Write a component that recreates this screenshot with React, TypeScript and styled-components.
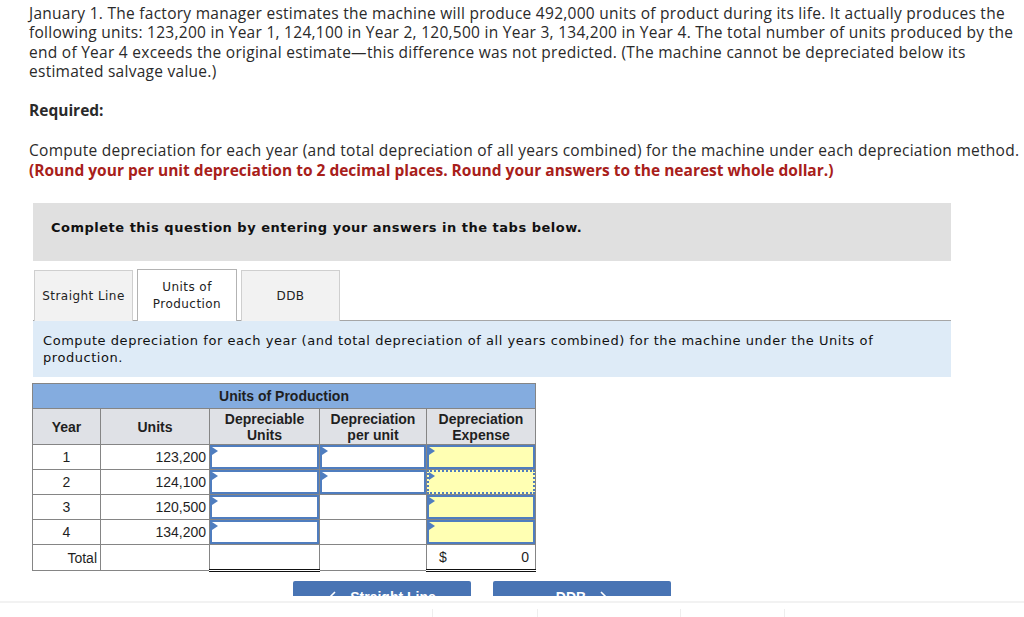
import React from 'react';
import styled, { createGlobalStyle, css } from 'styled-components';

const BODY_FONT = `"Open Sans", Lato, Arial, sans-serif`;
const PANEL_FONT = `"DejaVu Sans", Verdana, sans-serif`;
const TABLE_FONT = `"Liberation Sans", Arial, sans-serif`;

const GlobalStyle = createGlobalStyle`
  html, body {
    margin: 0;
    padding: 0;
    background: #fff;
  }
  body {
    overflow: hidden;
  }
`;

type Row = {
  year: string;
  units: string;
  perUnitInput: boolean;
  focused?: boolean;
};

const rows: Row[] = [
  { year: '1', units: '123,200', perUnitInput: true },
  { year: '2', units: '124,100', perUnitInput: true, focused: true },
  { year: '3', units: '120,500', perUnitInput: false },
  { year: '4', units: '134,200', perUnitInput: false },
];

const App = () => {
  return (
    <>
      <GlobalStyle />
      <Page>
        <Text>
          January 1. The factory manager estimates the machine will produce 492,000 units of product during its
          life. It actually produces the following units: 123,200 in Year 1, 124,100 in Year 2, 120,500 in Year 3,
          134,200 in Year 4. The total number of units produced by the end of Year 4 exceeds the original
          estimate—this difference was not predicted. (The machine cannot be depreciated below its estimated salvage
          value.)
        </Text>
        <Heading>Required:</Heading>
        <Text $loose>
          Compute depreciation for each year (and total depreciation of all years combined) for the machine under
          each depreciation method.
          <br />
          <Warning>
            (Round your per unit depreciation to 2 decimal places. Round your answers to the nearest whole dollar.)
          </Warning>
        </Text>

        <Question>
          <Banner>Complete this question by entering your answers in the tabs below.</Banner>

          <TabBar>
            <Tab>Straight Line</Tab>
            <Tab $active>
              Units of
              <br />
              Production
            </Tab>
            <Tab>DDB</Tab>
          </TabBar>

          <Instructions>
            Compute depreciation for each year (and total depreciation of all years combined) for the machine under
            the Units of production.
          </Instructions>

          <Grid>
            <colgroup>
              <col style={{ width: 68 }} />
              <col style={{ width: 109 }} />
              <col style={{ width: 110 }} />
              <col style={{ width: 107 }} />
              <col style={{ width: 109 }} />
            </colgroup>
            <thead>
              <tr>
                <BlueHead colSpan={5}>Units of Production</BlueHead>
              </tr>
              <tr>
                <GrayHead>Year</GrayHead>
                <GrayHead>Units</GrayHead>
                <GrayHead>
                  Depreciable
                  <br />
                  Units
                </GrayHead>
                <GrayHead>
                  Depreciation
                  <br />
                  per unit
                </GrayHead>
                <GrayHead>
                  Depreciation
                  <br />
                  Expense
                </GrayHead>
              </tr>
            </thead>
            <tbody>
              {rows.map((r) => (
                <tr key={r.year}>
                  <Cell $align="center">{r.year}</Cell>
                  <Cell $align="right">{r.units}</Cell>
                  <EntryCell>
                    <Entry />
                  </EntryCell>
                  {r.perUnitInput ? (
                    <EntryCell>
                      <Entry />
                    </EntryCell>
                  ) : (
                    <Cell />
                  )}
                  <EntryCell>
                    <Entry $yellow $focused={r.focused} />
                  </EntryCell>
                </tr>
              ))}
              <tr>
                <Cell $align="right">Total</Cell>
                <Cell />
                <TotalCell />
                <Cell />
                <TotalCell>
                  <Money>
                    <span>$</span>
                    <span>0</span>
                  </Money>
                </TotalCell>
              </tr>
            </tbody>
          </Grid>

          <ButtonRow>
            <NavButton>
              <Chevron viewBox="0 0 10 14">
                <path d="M7 2 L2 7 L7 12" />
              </Chevron>
              Straight Line
            </NavButton>
            <NavButton>
              DDB
              <Chevron viewBox="0 0 10 14">
                <path d="M3 2 L8 7 L3 12" />
              </Chevron>
            </NavButton>
          </ButtonRow>
        </Question>
      </Page>

      <Footer>
        <FooterBar>
          <FooterSlot style={{ width: 432 }} />
          <FooterSlot style={{ width: 104 }} $divider />
          <FooterSlot style={{ width: 142 }} $divider />
          <FooterSlot style={{ width: 103 }} $divider />
          <FooterSlot $divider />
        </FooterBar>
      </Footer>
    </>
  );
};

export default App;

const Page = styled.div`
  padding: 4px 0 40px 29px;
  font-family: ${BODY_FONT};
  color: #2a2a2a;
`;

const Text = styled.p<{ $loose?: boolean }>`
  width: 1003px;
  margin: 0 0 20px;
  font-size: 15.5px;
  letter-spacing: 0.27px;
  line-height: ${(p) => (p.$loose ? '20px' : '19.3px')};
`;

const Heading = styled.h3`
  margin: 0 0 20px;
  font-size: 15.5px;
  line-height: 19.3px;
  font-weight: 700;
`;

const Warning = styled.strong`
  color: #a8201a;
  font-weight: 700;
  letter-spacing: 0;
`;

const Question = styled.div`
  margin: 23px 0 0 4px;
  width: 918px;
`;

const Banner = styled.div`
  height: 58px;
  box-sizing: border-box;
  padding: 17px 18px 0;
  background: #e0e0e0;
  font-family: ${PANEL_FONT};
  font-size: 13px;
  letter-spacing: 0.5px;
  font-weight: 700;
  color: #111;
`;

const TabBar = styled.div`
  display: flex;
  align-items: flex-end;
  gap: 4px;
  margin-top: 8px;
  padding-left: 1px;
  height: 51px;
  border-bottom: 1px solid #a6a6a6;
`;

const Tab = styled.div<{ $active?: boolean }>`
  display: flex;
  align-items: center;
  justify-content: center;
  width: 99px;
  height: 51px;
  box-sizing: border-box;
  margin-bottom: -1px;
  border: 1px solid #cfcfcf;
  border-bottom: none;
  background: #f2f2f2;
  font-family: ${PANEL_FONT};
  font-size: 12px;
  letter-spacing: 0.45px;
  line-height: 17px;
  text-align: center;
  color: #222;

  ${(p) =>
    p.$active &&
    css`
      width: 100px;
      height: 52px;
      background: #fff;
      border-color: #b3b3b3;
    `}
`;

const Instructions = styled.div`
  height: 56px;
  box-sizing: border-box;
  padding: 11px 10px 0;
  background: #deebf7;
  font-family: ${PANEL_FONT};
  font-size: 13px;
  letter-spacing: 0.55px;
  line-height: 17px;
  color: #111;
`;

const Grid = styled.table`
  margin: 6px 0 0 -1px;
  border-collapse: collapse;
  table-layout: fixed;
  width: 504px;
  font-family: ${TABLE_FONT};
  font-size: 14px;
  color: #1f1f1f;

  th,
  td {
    border: 1px solid #858585;
  }
`;

const BlueHead = styled.th`
  height: 24px;
  padding: 0;
  background: #84acdf;
  font-weight: 700;
  text-align: center;
`;

const GrayHead = styled.th`
  height: 35px;
  padding: 0;
  background: #dfe1e6;
  font-weight: 700;
  line-height: 16px;
  text-align: center;
`;

const Cell = styled.td<{ $align?: 'left' | 'center' | 'right' }>`
  height: 24px;
  padding: 0 3px;
  text-align: ${(p) => p.$align ?? 'left'};
  background: #fff;
`;

const EntryCell = styled.td`
  height: 24px;
  padding: 0;
`;

const Entry = styled.div<{ $yellow?: boolean; $focused?: boolean }>`
  position: relative;
  height: 24px;
  box-sizing: border-box;
  border: 2px solid #4f7dbf;
  background: ${(p) => (p.$yellow ? '#ffffb3' : '#fff')};

  ${(p) =>
    p.$focused &&
    css`
      border: 2px dotted #4f7dbf;
    `}

  &::before {
    content: '';
    position: absolute;
    top: 0;
    left: 0;
    border-top: 4px solid transparent;
    border-bottom: 4px solid transparent;
    border-left: 6px solid #4f7dbf;
  }
`;

const TotalCell = styled.td`
  height: 24px;
  padding: 0 6px 0 12px;
  background: #fff;
  && {
    border-top: 1px solid #111;
    border-bottom: 3px double #111;
  }
`;

const Money = styled.div`
  display: flex;
  justify-content: space-between;
`;

const ButtonRow = styled.div`
  display: flex;
  gap: 22px;
  margin: 9px 0 0 260px;
`;

const NavButton = styled.button`
  display: flex;
  align-items: center;
  justify-content: center;
  gap: 12px;
  width: 178px;
  height: 32px;
  border: none;
  border-radius: 2px;
  background: #4874b4;
  color: #fff;
  font-family: ${TABLE_FONT};
  font-size: 14px;
  font-weight: 700;
`;

const Chevron = styled.svg`
  width: 10px;
  height: 14px;
  fill: none;
  stroke: #fff;
  stroke-width: 1.6;
`;

const Footer = styled.div`
  position: fixed;
  left: 0;
  right: 0;
  bottom: 0;
  height: 21px;
  padding-top: 5px;
  box-sizing: border-box;
  background: #fff;
`;

const FooterBar = styled.div`
  display: flex;
  height: 100%;
  border-top: 2px solid #f2f2f2;
  padding-top: 6px;
  box-sizing: border-box;
`;

const FooterSlot = styled.div<{ $divider?: boolean }>`
  height: 100%;
  ${(p) =>
    p.$divider &&
    css`
      border-left: 1px solid #eeeeee;
    `}
`;
